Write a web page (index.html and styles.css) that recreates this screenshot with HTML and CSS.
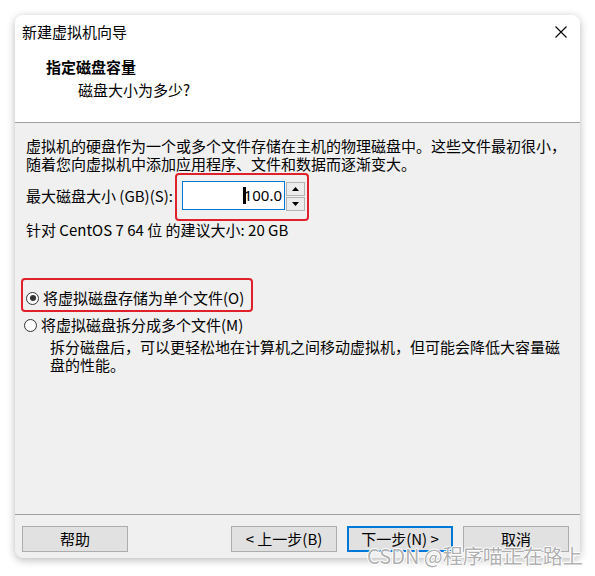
FILE: index.html
```html
<!DOCTYPE html>
<html lang="zh-CN">
<head>
<meta charset="utf-8">
<title>新建虚拟机向导</title>
<link rel="stylesheet" href="styles.css">
</head>
<body>
<div class="window">
  <div class="header">
    <div class="titlebar">
      <span class="title">新建虚拟机向导</span>
      <svg class="close" width="12" height="12" viewBox="0 0 12 12"><path d="M0.5 0.5 L11.5 11.5 M11.5 0.5 L0.5 11.5" stroke="#000" stroke-width="1.1" fill="none"/></svg>
    </div>
    <div class="heading">指定磁盘容量</div>
    <div class="subheading">磁盘大小为多少?</div>
  </div>
  <div class="body">
    <p class="para"><span class="ln">虚拟机的硬盘作为一个或多个文件存储在主机的物理磁盘中。这些文件最初很小，</span><span class="ln">随着您向虚拟机中添加应用程序、文件和数据而逐渐变大。</span></p>
    <div class="size-row">
      <span class="size-label">最大磁盘大小 (GB)(S):</span>
      <div class="mark size-mark">
        <div class="spin">
          <div class="spin-input"><span class="caret"></span>100.0</div>
          <div class="spin-btns">
            <div class="spin-btn"><svg width="7" height="4" viewBox="0 0 7 4"><path d="M3.5 0 L7 4 L0 4 Z" fill="#000"/></svg></div>
            <div class="spin-btn"><svg width="7" height="4" viewBox="0 0 7 4"><path d="M0 0 L7 0 L3.5 4 Z" fill="#000"/></svg></div>
          </div>
        </div>
      </div>
    </div>
    <p class="line">针对 CentOS 7 64 位 的建议大小: 20 GB</p>
    <div class="mark radio-mark">
      <div class="radio-row"><span class="radio checked"></span>将虚拟磁盘存储为单个文件(O)</div>
    </div>
    <div class="radio-row second"><span class="radio"></span>将虚拟磁盘拆分成多个文件(M)</div>
    <p class="desc"><span class="ln">拆分磁盘后，可以更轻松地在计算机之间移动虚拟机，但可能会降低大容量磁</span><span class="ln">盘的性能。</span></p>
  </div>
  <div class="footer">
    <button class="btn">帮助</button>
    <div class="btn-group">
      <button class="btn">&lt; 上一步(B)</button>
      <button class="btn primary">下一步(N) &gt;</button>
      <button class="btn">取消</button>
    </div>
  </div>
</div>
<div class="watermark">CSDN @程序喵正在路上</div>
</body>
</html>
```

FILE: styles.css
```css
html, body {
  margin: 0;
  padding: 0;
  background: #ffffff;
}
body {
  width: 595px;
  height: 576px;
  position: relative;
  overflow: hidden;
  font-family: "Noto Sans CJK SC", "Noto Sans", sans-serif;
  font-size: 15px;
  color: #000;
}
.window {
  position: absolute;
  left: 15px;
  top: 15px;
  width: 565px;
  height: 543px;
  border-radius: 8px;
  overflow: hidden;
  box-shadow: 0 2px 9px rgba(0,0,0,0.28);
  display: flex;
  flex-direction: column;
  background: #f0f0f0;
}
.header {
  background: #fff;
  border-bottom: 1px solid #a0a0a0;
  box-sizing: border-box;
  height: 108px;
}
.titlebar {
  height: 33px;
  display: flex;
  align-items: center;
  justify-content: space-between;
  padding: 0 13px 0 7px;
}
.title {
  line-height: 18px;
}
.heading {
  font-weight: bold;
  margin: 10px 0 0 31px;
  line-height: 18px;
}
.subheading {
  margin: 5px 0 0 63px;
  line-height: 18px;
}
.body {
  flex: 1;
  padding: 14px 0 0 11px;
  border-bottom: 1px solid #a0a0a0;
  display: flex;
  flex-direction: column;
}
.para, .line, .desc {
  margin: 0;
  line-height: 18px;
  white-space: nowrap;
}
.ln {
  display: block;
  height: 18px;
  line-height: 18px;
  overflow: visible;
}
.size-row {
  display: flex;
  align-items: center;
  margin-top: 0;
  height: 47px;
}
.size-label {
  width: 149px;
  line-height: 18px;
  margin-top: -2px;
}
.mark {
  border: 2px solid #e0202a;
  border-radius: 4px;
}
.size-mark {
  padding: 6px 2px 8px 5px;
}
.spin {
  display: flex;
}
.spin-input {
  width: 99px;
  height: 27px;
  border: 1px solid #0078d7;
  background: #fff;
  display: flex;
  align-items: center;
  justify-content: flex-end;
  padding-right: 2px;
  font-family: "Noto Sans", sans-serif;
  font-size: 15px;
}
.caret {
  width: 3px;
  height: 17px;
  background: #000;
  margin-right: -2px;
}
.spin-btns {
  display: flex;
  flex-direction: column;
  margin-left: 1px;
  margin-top: 1px;
  gap: 1px;
}
.spin-btn {
  width: 17px;
  height: 12px;
  border: 1px solid #b4b4b4;
  background: #ececec;
  display: flex;
  align-items: center;
  justify-content: center;
}
.line {
  margin-top: 1px;
}
.radio-mark {
  margin: 39px 0 0 -5px;
  width: 225px;
  padding: 9px 0 3px 3px;
}
.radio-row {
  display: flex;
  align-items: center;
  height: 18px;
  line-height: 18px;
  white-space: nowrap;
}
.radio {
  width: 11px;
  height: 11px;
  border: 1px solid #333;
  border-radius: 50%;
  background: #fff;
  margin-right: 4px;
  position: relative;
  box-sizing: content-box;
}
.radio.checked::after {
  content: "";
  position: absolute;
  left: 2.5px;
  top: 2.5px;
  width: 6px;
  height: 6px;
  border-radius: 50%;
  background: #333;
}
.second {
  margin-top: 4px;
  margin-left: -2px;
}
.desc {
  margin: 4px 0 0 24px;
}
.footer {
  height: 43px;
  display: flex;
  align-items: flex-start;
  padding: 11px 11px 0 7px;
  box-sizing: border-box;
}
.btn-group {
  margin-left: auto;
  display: flex;
  gap: 10px;
}
.btn {
  width: 106px;
  height: 26px;
  border: 1px solid #adadad;
  background: #e1e1e1;
  font-family: "Noto Sans CJK SC", "Noto Sans", sans-serif;
  font-size: 15px;
  color: #000;
  padding: 0;
  line-height: 18px;
}
.btn.primary {
  border: 2px solid #0078d7;
}
.watermark {
  position: absolute;
  left: 367px;
  top: 544px;
  font-family: "Noto Sans CJK SC", "Noto Sans", sans-serif;
  font-size: 20px;
  line-height: 24px;
  color: rgba(150,150,150,0.75);
  white-space: nowrap;
  text-shadow: 1px 0 0 #fff, -1px 0 0 #fff, 0 1px 0 #fff, 0 -1px 0 #fff;
}
```
